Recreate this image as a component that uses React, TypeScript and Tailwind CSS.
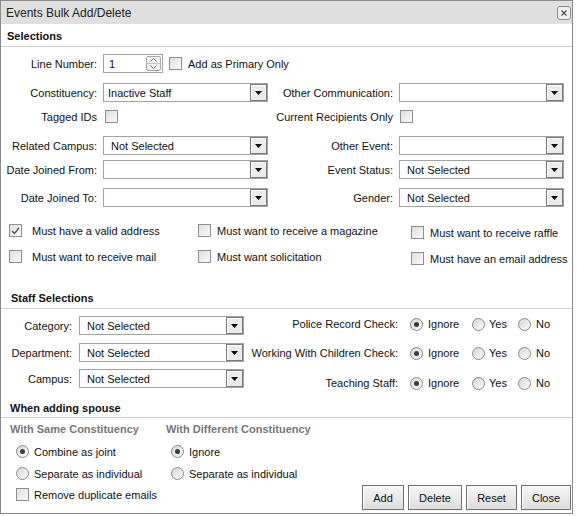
import React from "react";

function Check({ checked = false }: { checked?: boolean }) {
  return (
    <span className="relative flex h-[13px] w-[13px] shrink-0 items-center justify-center border border-[#8e8f8f] bg-linear-to-br from-[#dedede] to-[#fbfbfb]">
      {checked && (
        <svg width="9" height="8" viewBox="0 0 9 8">
          <polyline points="1,4 3.5,6.5 8,1" fill="none" stroke="#555" strokeWidth="1.4" />
        </svg>
      )}
    </span>
  );
}

function Radio({ on = false }: { on?: boolean }) {
  return (
    <span className="flex h-[13px] w-[13px] shrink-0 items-center justify-center rounded-full border border-[#8a8a8a] bg-linear-to-br from-[#d6d6d6] to-[#fbfbfb]">
      {on && <span className="h-[5px] w-[5px] rounded-full bg-[#3c3c3c]" />}
    </span>
  );
}

function Select({ value = "", pad = "pl-[7px]" }: { value?: string; pad?: string }) {
  return (
    <div className="flex h-[19px] w-[165px] shrink-0 border border-[#a3a3a3] bg-white">
      <span className={`flex-1 truncate pt-[1px] leading-[17px] ${pad}`}>{value}</span>
      <span className="flex h-[17px] w-[17px] items-center justify-center border border-[#7a7a7a] bg-[#ebebeb] shadow-[inset_1px_1px_0_#fff]">
        <svg width="7" height="4" viewBox="0 0 7 4">
          <polygon points="0,0 7,0 3.5,4" fill="#000" />
        </svg>
      </span>
    </div>
  );
}

function Btn({ label, w }: { label: string; w: string }) {
  return (
    <button
      className={`h-[25px] ${w} border border-[#707070] bg-linear-to-b from-[#f6f6f6] to-[#dedede] text-[11px] shadow-[inset_1px_1px_0_#fff]`}
    >
      {label}
    </button>
  );
}

function RadioSet({ label }: { label: string }) {
  return (
    <div className="flex h-[16px] items-center">
      <span className="w-[148px] text-right">{label}</span>
      <span className="ml-[12px] flex w-[62px] items-center gap-[5px]">
        <Radio on />
        Ignore
      </span>
      <span className="flex w-[46px] items-center gap-[4px]">
        <Radio />
        Yes
      </span>
      <span className="flex items-center gap-[5px]">
        <Radio />
        No
      </span>
    </div>
  );
}

export default function App() {
  return (
    <div className="h-[516px] w-[577px] whitespace-nowrap bg-white font-['Liberation_Sans',Arial,sans-serif] text-[11px] leading-[14px] text-[#111]">
      <div className="flex h-[514px] w-[573px] flex-col border border-[#8b8b8b]">
        {/* title bar */}
        <div className="flex h-[23px] shrink-0 items-center justify-between bg-[#dfdfdf] pl-[5px] pr-[1px]">
          <span className="text-[12px] text-[#222]">Events Bulk Add/Delete</span>
          <span className="flex h-[14px] w-[14px] items-center justify-center rounded-[3px] border border-[#8c8c8c] bg-[#eeeeee]">
            <svg width="8" height="8" viewBox="0 0 8 8">
              <path d="M1.5 1.5 L6.5 6.5 M6.5 1.5 L1.5 6.5" stroke="#555" strokeWidth="1.3" />
            </svg>
          </span>
        </div>

        {/* Selections */}
        <div className="h-[23px] shrink-0 border-b border-[#d2d2d2] pl-[6px] pt-[5px] font-bold">Selections</div>

        <div className="h-[238px] shrink-0 pt-[7px]">
          <div className="flex h-[19px] items-center">
            <span className="w-[96px] text-right">Line Number:</span>
            <div className="ml-[6px] flex h-[19px] w-[60px] items-center border border-[#a3a3a3] bg-white pl-[5px]">
              <span className="flex-1">1</span>
              <span className="mr-[1px] flex h-[15px] w-[15px] flex-col overflow-hidden rounded-[2px] border border-[#a9a9a9] bg-[#f1f1f1]">
                <span className="flex h-[7px] items-center justify-center border-b border-[#c4c4c4]">
                  <svg width="7" height="4" viewBox="0 0 7 4">
                    <polyline points="0.5,3.5 3.5,0.5 6.5,3.5" fill="none" stroke="#777" />
                  </svg>
                </span>
                <span className="flex flex-1 items-center justify-center">
                  <svg width="7" height="4" viewBox="0 0 7 4">
                    <polyline points="0.5,0.5 3.5,3.5 6.5,0.5" fill="none" stroke="#777" />
                  </svg>
                </span>
              </span>
            </div>
            <span className="ml-[6px]">
              <Check />
            </span>
            <span className="ml-[6px]">Add as Primary Only</span>
          </div>

          <div className="mt-[10px] flex h-[19px] items-center">
            <div className="flex w-[268px] items-center">
              <span className="w-[96px] text-right">Constituency:</span>
              <span className="ml-[6px]">
                <Select value="Inactive Staff" pad="pl-[4px]" />
              </span>
            </div>
            <span className="w-[124px] text-right">Other Communication:</span>
            <span className="ml-[6px]">
              <Select />
            </span>
          </div>

          <div className="mt-[8px] flex h-[13px] items-center">
            <div className="flex w-[268px] items-center">
              <span className="w-[96px] text-right">Tagged IDs</span>
              <span className="ml-[8px]">
                <Check />
              </span>
            </div>
            <span className="w-[124px] text-right">Current Recipients Only</span>
            <span className="ml-[7px]">
              <Check />
            </span>
          </div>

          <div className="mt-[13px] flex h-[19px] items-center">
            <div className="flex w-[268px] items-center">
              <span className="w-[96px] text-right">Related Campus:</span>
              <span className="ml-[6px]">
                <Select value="Not Selected" />
              </span>
            </div>
            <span className="w-[124px] text-right">Other Event:</span>
            <span className="ml-[6px]">
              <Select />
            </span>
          </div>

          <div className="mt-[5px] flex h-[19px] items-center">
            <div className="flex w-[268px] items-center">
              <span className="w-[96px] text-right">Date Joined From:</span>
              <span className="ml-[6px]">
                <Select />
              </span>
            </div>
            <span className="w-[124px] text-right">Event Status:</span>
            <span className="ml-[6px]">
              <Select value="Not Selected" />
            </span>
          </div>

          <div className="mt-[9px] flex h-[19px] items-center">
            <div className="flex w-[268px] items-center">
              <span className="w-[96px] text-right">Date Joined To:</span>
              <span className="ml-[6px]">
                <Select />
              </span>
            </div>
            <span className="w-[124px] text-right">Gender:</span>
            <span className="ml-[6px]">
              <Select value="Not Selected" />
            </span>
          </div>

          <div className="mt-[17px] flex">
            <div className="flex w-[197px] flex-col gap-[13px] pl-[8px]">
              <div className="flex h-[13px] items-center gap-[10px]">
                <Check checked />
                Must have a valid address
              </div>
              <div className="flex h-[13px] items-center gap-[10px]">
                <Check />
                Must want to receive mail
              </div>
            </div>
            <div className="flex w-[213px] flex-col gap-[13px]">
              <div className="flex h-[13px] items-center gap-[6px]">
                <Check />
                Must want to receive a magazine
              </div>
              <div className="flex h-[13px] items-center gap-[6px]">
                <Check />
                Must want solicitation
              </div>
            </div>
            <div className="flex flex-col gap-[13px] pt-[2px]">
              <div className="flex h-[13px] items-center gap-[6px]">
                <Check />
                Must want to receive raffle
              </div>
              <div className="flex h-[13px] items-center gap-[6px]">
                <Check />
                Must have an email address
              </div>
            </div>
          </div>
        </div>

        {/* Staff Selections */}
        <div className="h-[24px] shrink-0 border-b border-[#d2d2d2] pl-[10px] pt-[6px] font-bold">Staff Selections</div>

        <div className="flex h-[87px] shrink-0 pt-[7px]">
          <div className="flex w-[249px] flex-col">
            <div className="flex h-[19px] items-center">
              <span className="w-[71px] text-right">Category:</span>
              <span className="ml-[7px]">
                <Select value="Not Selected" />
              </span>
            </div>
            <div className="mt-[8px] flex h-[19px] items-center">
              <span className="w-[71px] text-right">Department:</span>
              <span className="ml-[7px]">
                <Select value="Not Selected" />
              </span>
            </div>
            <div className="mt-[7px] flex h-[19px] items-center">
              <span className="w-[71px] text-right">Campus:</span>
              <span className="ml-[7px]">
                <Select value="Not Selected" />
              </span>
            </div>
          </div>
          <div className="flex flex-col gap-[13px]">
            <RadioSet label="Police Record Check:" />
            <RadioSet label="Working With Children Check:" />
            <div className="mt-[1px]">
              <RadioSet label="Teaching Staff:" />
            </div>
          </div>
        </div>

        {/* When adding spouse */}
        <div className="h-[22px] shrink-0 border-b border-[#d2d2d2] pl-[9px] pt-[5px] font-bold">When adding spouse</div>

        <div className="flex flex-1 pt-[4px]">
          <div className="flex w-[156px] flex-col pl-[9px]">
            <div className="font-bold text-[#777]">With Same Constituency</div>
            <div className="mt-[9px] flex h-[13px] items-center gap-[5px] pl-[6px]">
              <Radio on />
              Combine as joint
            </div>
            <div className="mt-[9px] flex h-[13px] items-center gap-[5px] pl-[6px]">
              <Radio />
              Separate as individual
            </div>
            <div className="mt-[8px] flex h-[13px] items-center gap-[5px] pl-[6px]">
              <Check />
              Remove duplicate emails
            </div>
          </div>
          <div className="flex flex-col pl-[9px]">
            <div className="font-bold text-[#777]">With Different Constituency</div>
            <div className="mt-[9px] flex h-[13px] items-center gap-[5px] pl-[5px]">
              <Radio on />
              Ignore
            </div>
            <div className="mt-[9px] flex h-[13px] items-center gap-[5px] pl-[5px]">
              <Radio />
              Separate as individual
            </div>
          </div>
          <div className="mb-[3px] ml-auto flex gap-[4px] self-end pr-[1px]">
            <Btn label="Add" w="w-[42px]" />
            <Btn label="Delete" w="w-[54px]" />
            <Btn label="Reset" w="w-[51px]" />
            <Btn label="Close" w="w-[50px]" />
          </div>
        </div>
      </div>
    </div>
  );
}
